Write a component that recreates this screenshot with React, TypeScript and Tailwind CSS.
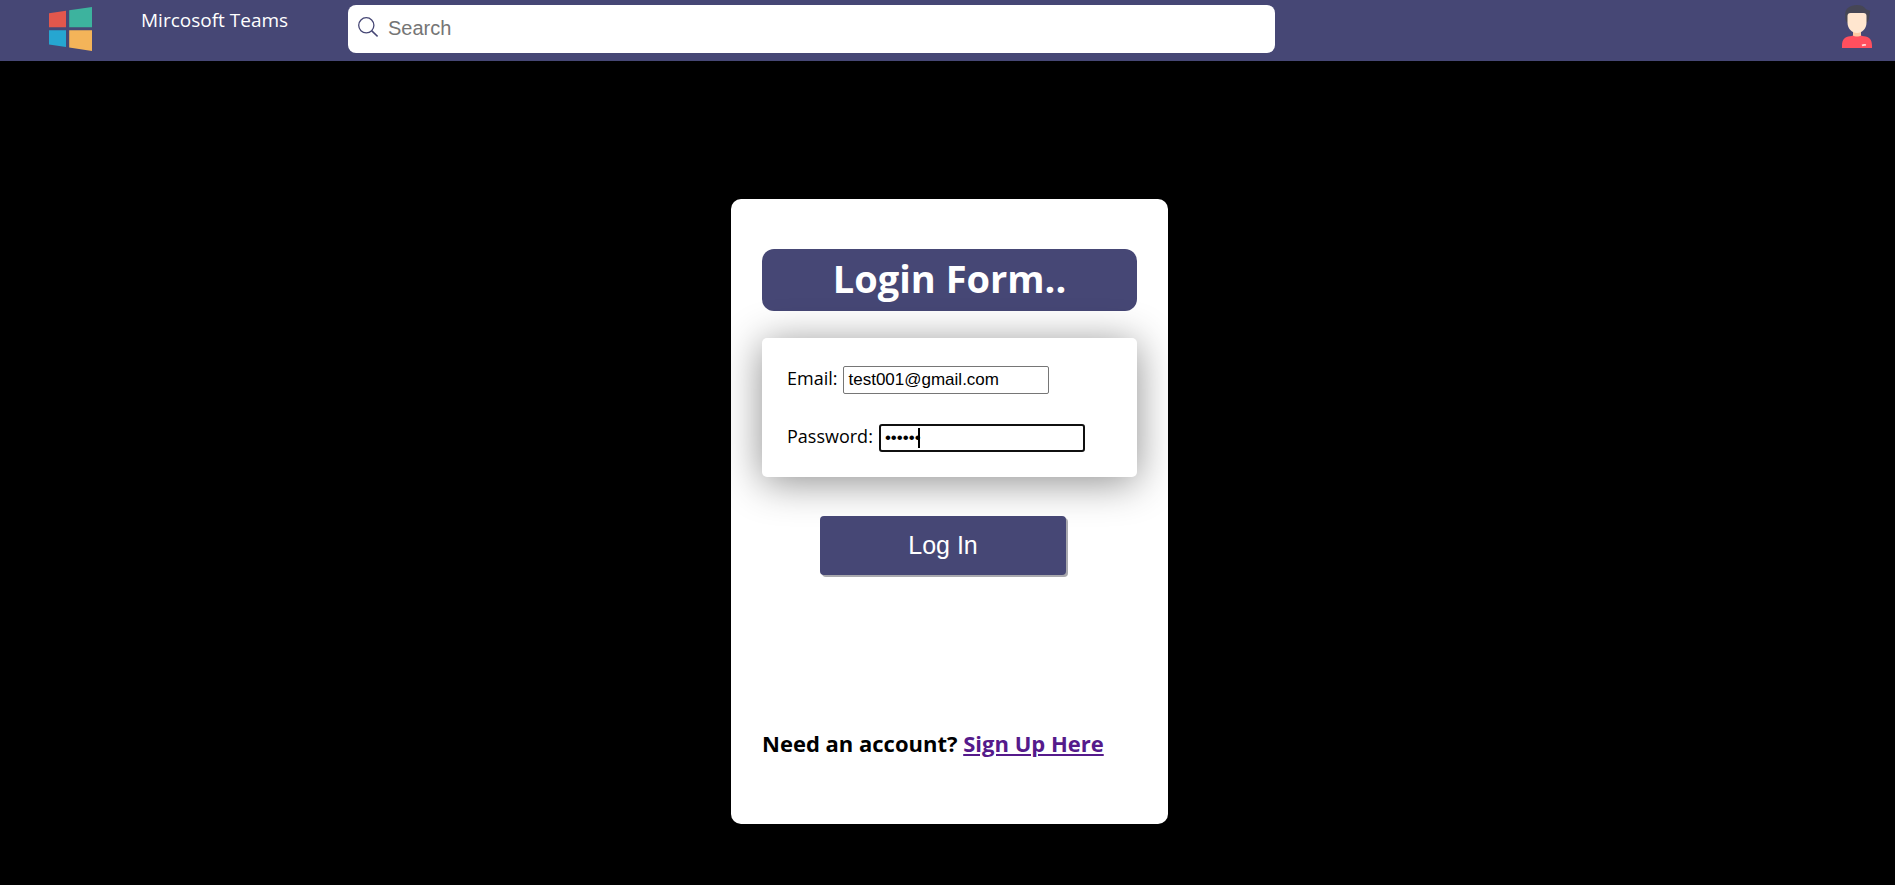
import React from "react";

function WindowsLogo() {
  return (
    <svg viewBox="0 0 44 44" className="h-11 w-11 shrink-0" aria-hidden="true">
      <path d="M0 6.2 17 3.8V20.200H0Z" fill="#e2574c" />
      <path d="M20.200 3.300 43 0V20.200H20.200Z" fill="#3db39e" />
      <path d="M0 23.200H17V40L0 37.600Z" fill="#26a6d1" />
      <path d="M20.200 23.200H43V44L20.200 40.600Z" fill="#f4b459" />
    </svg>
  );
}

function SearchIcon() {
  return (
    <svg viewBox="0 0 20 20" className="h-5 w-5 shrink-0" fill="none" stroke="#464775" aria-hidden="true">
      <circle cx="8.3" cy="8.3" r="7.6" strokeWidth="1.3" />
      <path d="M13.8 13.8 19.6 19.4" strokeWidth="1.6" />
    </svg>
  );
}

function Avatar() {
  return (
    <svg viewBox="0 0 30 43" className="h-[43px] w-[30px]" aria-hidden="true">
      <path d="M5.500 18C3.800 16.500 3.200 14.500 3.200 12V9C3.200 3.500 8 0 15 0c4 0 7.500 1.500 9 4.200L28.300 6C27.500 8 27.600 10 27.200 12.500c-.3 2.300-1 4-2.700 5.500Z" fill="#464655" />
      <path d="M11 25h8v8h-8Z" fill="#fdc9a2" />
      <path d="M5.500 11c0-2 1-3 3-3h13c2 0 3 1 3 3v6.500c0 6-4.300 10.500-9.500 10.500S5.500 23.500 5.500 17.500Z" fill="#ffe6cf" />
      <path d="M0 43v-2.500C0 34.500 3 31.500 8 31.200c1.200 0 2-.3 3-.8 1.500 1.500 6.500 1.500 8 0 1 .5 1.800.8 3 .8 5 .3 8 3.300 8 9.300V43Z" fill="#ff4f5e" />
      <path d="M20 40.500q1.500-1 4-.5" fill="none" stroke="#ffdcdc" strokeWidth="1.600" />
    </svg>
  );
}

export default function App() {
  return (
    <div className="flex min-h-screen flex-col bg-black font-['Open_Sans','Noto_Sans',sans-serif] text-black">
      <header className="flex h-[61px] items-start bg-[#464775] pr-[23px] pl-[49px]">
        <div className="flex w-[299px] shrink-0 pt-[7px]">
          <WindowsLogo />
          <span className="ml-12 text-[19px] leading-[26px] text-white">Mircosoft Teams</span>
        </div>
        <label className="mt-[5px] flex h-12 w-[927px] min-w-0 items-center gap-[10px] rounded-lg bg-white px-[10px] pb-1">
          <SearchIcon />
          <input
            type="search"
            placeholder="Search"
            aria-label="Search"
            className="min-w-0 flex-1 bg-transparent pt-0.5 font-['Liberation_Sans',sans-serif] text-xl outline-none placeholder:text-[#757575]"
          />
        </label>
        <button type="button" aria-label="Profile" className="mt-[5px] ml-auto">
          <Avatar />
        </button>
      </header>

      <main className="flex flex-1 justify-center pt-[138px] pb-[61px] pl-1">
        <form
          onSubmit={(e) => e.preventDefault()}
          className="flex w-[437px] flex-col self-start rounded-[10px] bg-white px-[31px] pt-[50px] pb-16"
        >
          <h1 className="rounded-xl bg-[#464775] pb-1 text-center text-[38px] leading-[58px] font-bold text-white">
            Login Form..
          </h1>
          <div className="mt-[27px] flex flex-col gap-[30px] rounded-[5px] bg-white px-[25px] pt-7 pb-[25px] text-[18px] leading-6 shadow-[0_5px_40px_rgba(0,0,0,0.45)]">
            <div className="flex gap-[6px]">
              <label htmlFor="email">Email:</label>
              <input
                id="email"
                type="email"
                defaultValue="test001@gmail.com"
                className="h-7 w-[206px] rounded-[2px] border border-[#767676] px-1 font-['Liberation_Sans',sans-serif] text-[17px]"
              />
            </div>
            <div className="flex gap-[6px]">
              <label htmlFor="password">Password:</label>
              <div className="relative">
                <input
                  id="password"
                  type="password"
                  defaultValue="secret"
                  autoFocus
                  className="h-7 w-[206px] rounded-[3px] border-2 border-[#101010] px-1 font-['Liberation_Sans',sans-serif] text-[17px] caret-transparent outline-none"
                />
                <span aria-hidden="true" className="pointer-events-none absolute top-1 left-[39px] h-5 w-0.5 bg-black" />
              </div>
            </div>
          </div>
          <button
            type="submit"
            className="mt-[39px] ml-[58px] h-[59px] w-[246px] rounded bg-[#464775] font-['Liberation_Sans',sans-serif] text-[25px] text-white shadow-[2px_2px_0_#a9a9ae]"
          >
            Log In
          </button>
          <p className="mt-[151px] text-[22px] leading-[34px] font-bold">
            Need an account?{" "}
            <a href="#signup" className="text-[#551a8b] underline decoration-2 underline-offset-2">
              Sign Up Here
            </a>
          </p>
        </form>
      </main>
    </div>
  );
}
